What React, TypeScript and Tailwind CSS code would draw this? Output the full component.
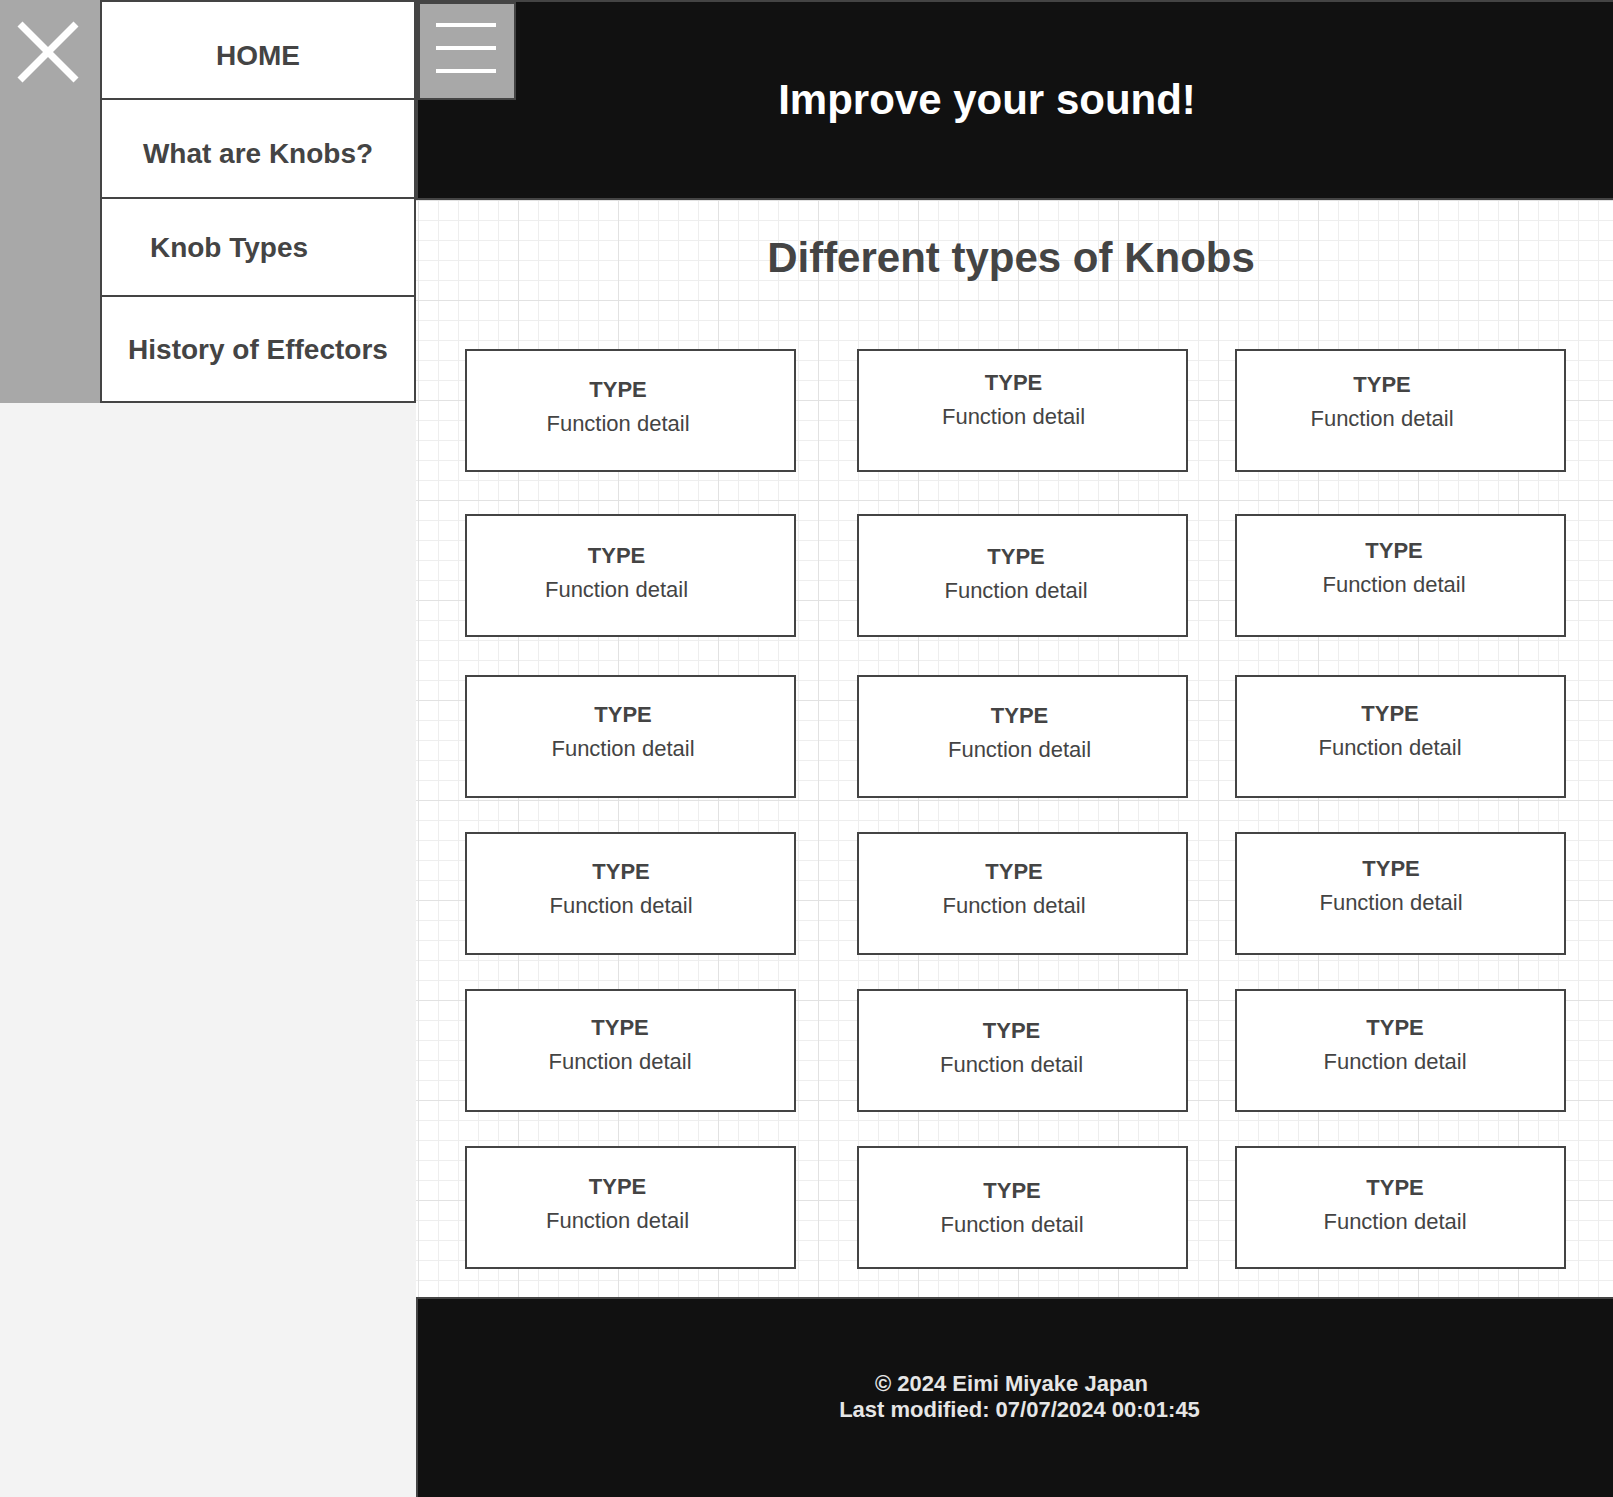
import React from "react";

const navItems: { label: string; h: string; cls: string }[] = [
  { label: "HOME", h: "h-[98px]", cls: "pt-[12px]" },
  { label: "What are Knobs?", h: "h-[99px]", cls: "pt-[10px]" },
  { label: "Knob Types", h: "h-[98px]", cls: "pr-[58px] pt-[2px]" },
  { label: "History of Effectors", h: "h-[104px]", cls: "pt-[2px]" },
];

const rowMargins: string[] = ["mt-[0px]", "mt-[42px]", "mt-[38px]", "mt-[34px]", "mt-[34px]", "mt-[34px]"];

const cardPads: string[] = [
  "pb-[7px] pr-[25px]",
  "pb-[22px] pr-[18px]",
  "pb-[18px] pr-[37px]",
  "pb-[6px] pr-[28px]",
  "pb-[3px] pr-[13px]",
  "pb-[16px] pr-[13px]",
  "pb-[10px] pr-[15px]",
  "pb-[8px] pr-[6px]",
  "pb-[11px] pr-[21px]",
  "pb-[9px] pr-[19px]",
  "pb-[10px] pr-[17px]",
  "pb-[16px] pr-[19px]",
  "pb-[11px] pr-[21px]",
  "pb-[6px] pr-[22px]",
  "pb-[11px] pr-[11px]",
  "pb-[8px] pr-[26px]",
  "pb-[0px] pr-[21px]",
  "pb-[5px] pr-[11px]",
];

function CloseIcon() {
  return (
    <svg width="64" height="64" viewBox="0 0 64 64" className="block">
      <line x1="4" y1="4" x2="60" y2="60" stroke="#ffffff" strokeWidth="7" />
      <line x1="60" y1="4" x2="4" y2="60" stroke="#ffffff" strokeWidth="7" />
    </svg>
  );
}

function Card({ pad, row }: { pad: string; row: string }) {
  return (
    <div
      className={`w-[331px] h-[123px] bg-white border-2 border-[#444] flex flex-col items-center justify-center text-[22px] leading-[34px] text-[#444] ${row} ${pad}`}
    >
      <div className="font-bold">TYPE</div>
      <div>Function detail</div>
    </div>
  );
}

export default function App() {
  return (
    <div className="w-[1613px] h-[1497px] flex font-['Liberation_Sans',Arial,sans-serif] overflow-hidden">
      {/* Left side */}
      <div className="w-[416px] shrink-0 bg-[#f3f3f3] flex flex-col">
        <div className="flex h-[403px]">
          <div className="w-[100px] bg-[#a8a8a8] pl-[16px] pt-[20px]">
            <CloseIcon />
          </div>
          <nav className="w-[316px] bg-white border-2 border-[#444] flex flex-col divide-y-2 divide-[#444]">
            {navItems.map((n) => (
              <div
                key={n.label}
                className={`${n.h} flex items-center justify-center text-[28px] font-bold text-[#444] ${n.cls}`}
              >
                {n.label}
              </div>
            ))}
          </nav>
        </div>
      </div>

      {/* Right side */}
      <div className="flex-1 flex flex-col">
        <header className="relative h-[200px] bg-[#111111] border-t-2 border-b-2 border-l-2 border-[#444] flex items-center justify-center pr-[57px]">
          <button className="absolute left-0 top-0 w-[98px] h-[98px] bg-[#a8a8a8] border-2 border-[#444] flex flex-col gap-[19px] pt-[19px] pl-[16px]">
            <span className="block w-[60px] h-[4px] bg-white" />
            <span className="block w-[60px] h-[4px] bg-white" />
            <span className="block w-[60px] h-[4px] bg-white" />
          </button>
          <h1 className="text-[42px] font-bold text-white leading-[48px]">Improve your sound!</h1>
        </header>

        <main className="h-[1097px] bg-white [background-image:linear-gradient(to_right,#e2e2e2_1px,transparent_1px),linear-gradient(to_bottom,#e2e2e2_1px,transparent_1px),linear-gradient(to_right,#eeeeee_1px,transparent_1px),linear-gradient(to_bottom,#eeeeee_1px,transparent_1px)] [background-size:100px_100px,100px_100px,20px_20px,20px_20px] [background-position:2px_0,2px_0,2px_0,2px_0]">
          <h2 className="mt-[34px] text-center pr-[7px] text-[42px] leading-[48px] font-bold text-[#444]">
            Different types of Knobs
          </h2>
          <div className="mt-[67px] pl-[49px] grid grid-cols-[392px_378px_331px]">
            {cardPads.map((p, i) => (
              <Card key={i} pad={p} row={rowMargins[Math.floor(i / 3)]} />
            ))}
          </div>
        </main>

        <footer className="h-[200px] bg-[#111111] border-t-2 border-l-2 border-[#444] flex flex-col items-center justify-center text-[22px] leading-[26px] font-bold text-[#e6e6e6] pb-[2px]">
          <div className="pr-[8px]">© 2024 Eimi Miyake Japan</div>
          <div className="pl-[8px]">Last modified: 07/07/2024 00:01:45</div>
        </footer>
      </div>
    </div>
  );
}
